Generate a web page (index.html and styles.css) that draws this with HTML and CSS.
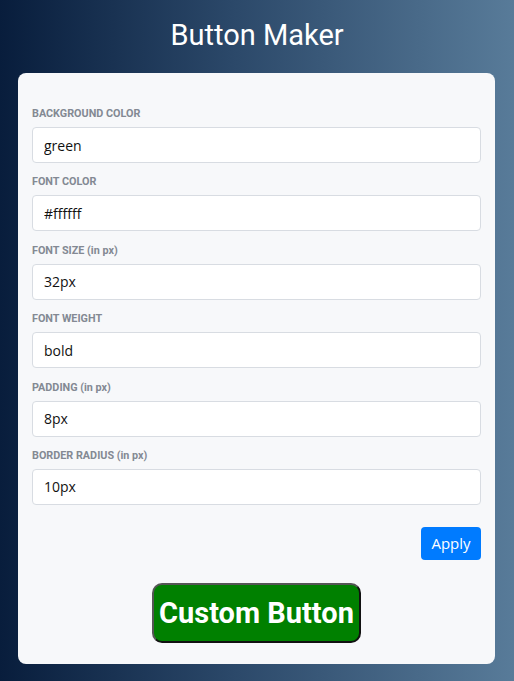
FILE: index.html
```html
<!DOCTYPE html>
<html>
<head>
<meta charset="utf-8">
<link rel="stylesheet" href="styles.css">
</head>
<body>
<h1 class="title">Button Maker</h1>
<div class="card">
  <div class="field">
    <label class="label">BACKGROUND COLOR</label>
    <input class="input" type="text" value="green">
  </div>
  <div class="field">
    <label class="label">FONT COLOR</label>
    <input class="input" type="text" value="#ffffff">
  </div>
  <div class="field">
    <label class="label">FONT SIZE (in px)</label>
    <input class="input" type="text" value="32px">
  </div>
  <div class="field">
    <label class="label">FONT WEIGHT</label>
    <input class="input" type="text" value="bold">
  </div>
  <div class="field">
    <label class="label">PADDING (in px)</label>
    <input class="input" type="text" value="8px">
  </div>
  <div class="field">
    <label class="label">BORDER RADIUS (in px)</label>
    <input class="input" type="text" value="10px">
  </div>
  <div class="actions">
    <button class="apply">Apply</button>
  </div>
  <div class="preview">
    <button class="custom">Custom Button</button>
  </div>
</div>
</body>
</html>
```
FILE: styles.css
```css
html, body {
  margin: 0;
  padding: 0;
}
body {
  width: 514px;
  height: 681px;
  overflow: hidden;
  background: linear-gradient(to right, #081d3c 0%, #2b4869 45%, #587b99 100%);
  font-family: Roboto, "Liberation Sans", sans-serif;
  box-sizing: border-box;
  padding-top: 15px;
}
.title {
  margin: 0;
  height: 40px;
  line-height: 40px;
  text-align: center;
  color: #ffffff;
  font-weight: 400;
  font-size: 29px;
}
.card {
  margin: 18px 19px 0 18px;
  background: #f7f8fa;
  border-radius: 8px;
  padding: 34px 14px 21px 14px;
  height: 591px;
  box-sizing: border-box;
}
.field {
  display: flex;
  flex-direction: column;
  margin-bottom: 12.4px;
}
.label {
  font-size: 10.8px;
  font-weight: 700;
  line-height: 13px;
  color: #838993;
  margin-bottom: 7px;
}
.input {
  height: 36px;
  box-sizing: border-box;
  border: 1px solid #d8dce2;
  border-radius: 4px;
  background: #ffffff;
  padding: 0 11px;
  font-family: "Open Sans", "Noto Sans", sans-serif;
  font-size: 14px;
  color: #111;
  outline: none;
}
.actions {
  display: flex;
  justify-content: flex-end;
  margin-top: 22px;
}
.apply {
  background: #007bff;
  color: #fff;
  border: none;
  border-radius: 4px;
  height: 33px;
  width: 60px;
  font-family: "Open Sans", "Noto Sans", sans-serif;
  font-size: 15px;
  padding: 0;
}
.preview {
  display: flex;
  justify-content: center;
  margin-top: 23px;
}
.custom {
  background: green;
  color: #ffffff;
  font-family: Roboto, "Liberation Sans", sans-serif;
  font-size: 29px;
  font-weight: bold;
  padding: 0;
  white-space: nowrap;
  border-radius: 10px;
  border: 2px solid #111;
  border-color: #555 #111 #111 #555;
  height: 60px;
  width: 209px;
  line-height: 40px;
}
```
